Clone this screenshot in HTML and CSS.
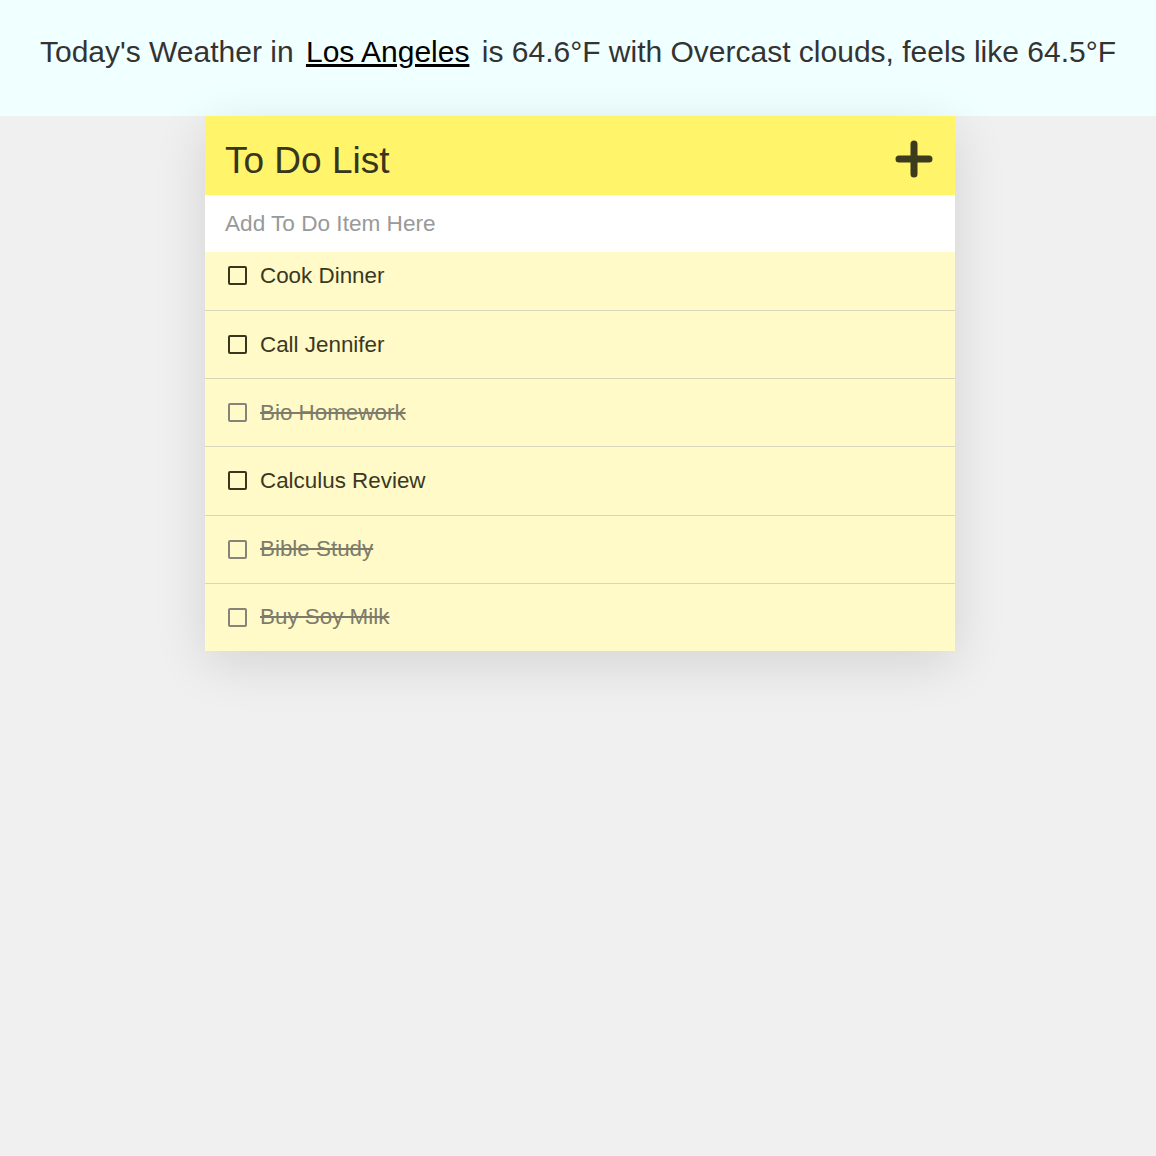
FILE: index.html
```html
<!DOCTYPE html>
<html>
<head>
<meta charset="utf-8">
<link rel="stylesheet" href="styles.css">
</head>
<body>
<header class="weather">
  <p class="weather-text">Today's Weather in <a class="city" href="#">Los Angeles</a> is 64.6°F with Overcast clouds, feels like 64.5°F</p>
</header>
<main class="todo">
  <div class="todo-head">
    <h1 class="todo-title">To Do List</h1>
    <svg class="plus" width="38" height="38" viewBox="0 0 38 38"><path d="M19 4v30M4 19h30" stroke="#3d3b1d" stroke-width="7" stroke-linecap="round"/></svg>
  </div>
  <div class="todo-input">Add To Do Item Here</div>
  <ul class="todo-list">
    <li class="item first"><span class="box"></span><span class="label">Cook Dinner</span></li>
    <li class="item"><span class="box"></span><span class="label">Call Jennifer</span></li>
    <li class="item done"><span class="box"></span><span class="label">Bio Homework</span></li>
    <li class="item"><span class="box"></span><span class="label">Calculus Review</span></li>
    <li class="item done"><span class="box"></span><span class="label">Bible Study</span></li>
    <li class="item done last"><span class="box"></span><span class="label">Buy Soy Milk</span></li>
  </ul>
</main>
</body>
</html>
```
FILE: styles.css
```css
html, body {
  margin: 0;
  padding: 0;
  background: #f0f0f0;
  font-family: "Liberation Sans", Arial, sans-serif;
}
body {
  min-height: 100vh;
}
.weather {
  background: #f0ffff;
  height: 116px;
  display: flex;
  align-items: center;
  justify-content: center;
}
.weather-text {
  margin: 0;
  font-size: 30px;
  color: #333;
  padding-bottom: 12px;
}
.city {
  color: #000;
  text-decoration: underline;
  padding: 0 4px;
}
.todo {
  position: relative;
  z-index: 1;
  width: 750px;
  margin-left: calc(50% - 373px);
  box-shadow: 0 12px 50px rgba(0,0,0,0.12);
  background: #fffac8;
}
.todo-head {
  background: #fff46a;
  height: 79px;
  display: flex;
  align-items: center;
  justify-content: space-between;
  padding: 0 22px 0 20px;
}
.todo-title {
  margin: 0;
  font-weight: normal;
  font-size: 37px;
  color: #38361c;
  padding-top: 10px;
}
.plus {
  display: block;
  margin-top: 6px;
}
.todo-input {
  background: #fff;
  height: 57px;
  display: flex;
  align-items: center;
  padding-left: 20px;
  font-size: 22.6px;
  color: #999;
}
.todo-list {
  list-style: none;
  margin: 0;
  padding: 0;
}
.item {
  height: 67.2px;
  border-bottom: 1px solid #d8d6b8;
  display: flex;
  align-items: center;
  padding-left: 23px;
  font-size: 22.4px;
  color: #3a3822;
}
.item.first {
  height: 58px;
  align-items: flex-start;
}
.item.first .box { margin-top: 14px; }
.item.first .label { margin-top: 11px; }
.item.last { border-bottom: none; }
.box {
  width: 15px;
  height: 15px;
  border: 2px solid #38361c;
  border-radius: 2px;
  margin-right: 13px;
  flex: none;
}
.done { color: #7d7c6c; }
.done .box { border-color: #85847a; }
.done .label { text-decoration: line-through; }
```
